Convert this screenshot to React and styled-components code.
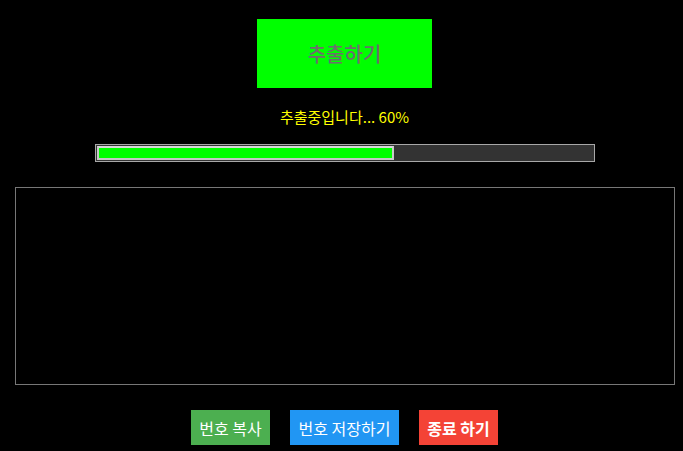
import React from "react";
import styled, { createGlobalStyle } from "styled-components";

const Global = createGlobalStyle`
  html, body { margin: 0; padding: 0; background: #000; }
  body { font-family: "Noto Sans CJK KR", "Noto Sans", sans-serif; }
`;

const Page = styled.div`
  width: 683px;
  height: 451px;
  box-sizing: border-box;
  padding: 19px 9px 0 15px;
  display: flex;
  flex-direction: column;
  align-items: center;
  background: #000;
`;

const ExtractButton = styled.button`
  width: 175px;
  height: 69px;
  border: none;
  background: #00ff00;
  color: #6e6e6e;
  font-family: "Noto Sans CJK KR", sans-serif;
  font-size: 20px;
  font-weight: 500;
  padding: 0;
`;

const Status = styled.div`
  margin-top: 16px;
  height: 25px;
  line-height: 25px;
  color: #ffff00;
  font-size: 15px;
  font-family: "Noto Sans CJK KR", sans-serif;
`;

const Track = styled.div`
  margin-top: 15px;
  width: 500px;
  height: 18px;
  box-sizing: border-box;
  border: 1px solid #a8a8a8;
  background: #333;
  padding: 1px;
  display: flex;
`;

const Fill = styled.div`
  height: 100%;
  box-sizing: border-box;
  border: 2px solid #c8c8c8;
  border-top-color: #d8d8d8;
  background: #00ff00;
`;

const Output = styled.textarea`
  margin-top: 25px;
  width: 660px;
  height: 198px;
  box-sizing: border-box;
  background: #000;
  border: 1px solid #777;
  resize: none;
  outline: none;
  color: #fff;
`;

const Actions = styled.div`
  margin-top: 25px;
  display: flex;
  gap: 20px;
`;

const ActionButton = styled.button`
  height: 35px;
  padding: 0 6px;
  border: none;
  background: ${(p) => p.$bg};
  color: #fff;
  font-family: "Noto Sans CJK KR", sans-serif;
  font-size: 16px;
  font-weight: ${(p) => (p.$bold ? 700 : 400)};
  min-width: ${(p) => p.$w}px;
`;

export default function App() {
  const progress = 60;
  return (
    <>
      <Global />
      <Page>
        <ExtractButton disabled>추출하기</ExtractButton>
        <Status>추출중입니다... {progress}%</Status>
        <Track>
          <Fill style={{ width: `${progress}%` }} />
        </Track>
        <Output readOnly />
        <Actions>
          <ActionButton $bg="#4caf50" $w={79}>번호 복사</ActionButton>
          <ActionButton $bg="#2196f3" $w={109}>번호 저장하기</ActionButton>
          <ActionButton $bg="#f44336" $w={79} $bold>종료 하기</ActionButton>
        </Actions>
      </Page>
    </>
  );
}
